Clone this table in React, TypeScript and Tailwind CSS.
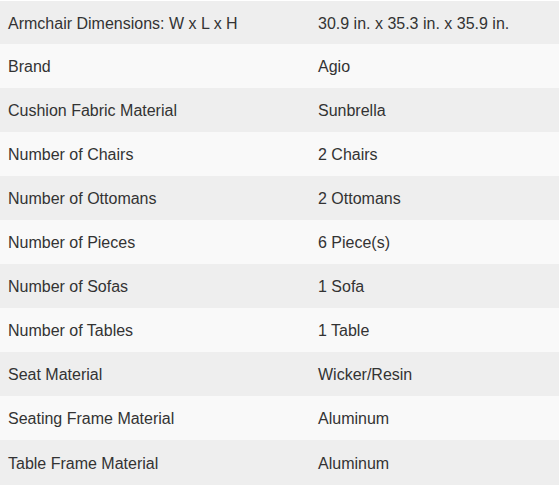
const specs: [string, string][] = [
  ["Armchair Dimensions: W x L x H", "30.9 in. x 35.3 in. x 35.9 in."],
  ["Brand", "Agio"],
  ["Cushion Fabric Material", "Sunbrella"],
  ["Number of Chairs", "2 Chairs"],
  ["Number of Ottomans", "2 Ottomans"],
  ["Number of Pieces", "6 Piece(s)"],
  ["Number of Sofas", "1 Sofa"],
  ["Number of Tables", "1 Table"],
  ["Seat Material", "Wicker/Resin"],
  ["Seating Frame Material", "Aluminum"],
  ["Table Frame Material", "Aluminum"],
];

export default function App() {
  return (
    <div className="w-[559px] bg-white pt-px font-['Liberation_Sans',Arial,sans-serif] text-base text-[#333]">
      {specs.map(([label, value], i) => (
        <div
          key={label}
          className={`flex items-center pt-[2px] ${
            i === 0 ? "h-[43px]" : i === specs.length - 1 ? "h-[45px]" : "h-11"
          } ${i % 2 === 0 ? "bg-[#eeeeee]" : "bg-[#f9f9f9]"}`}
        >
          <div className="w-[310px] px-2">{label}</div>
          <div className="flex-1 px-2">{value}</div>
        </div>
      ))}
    </div>
  );
}
